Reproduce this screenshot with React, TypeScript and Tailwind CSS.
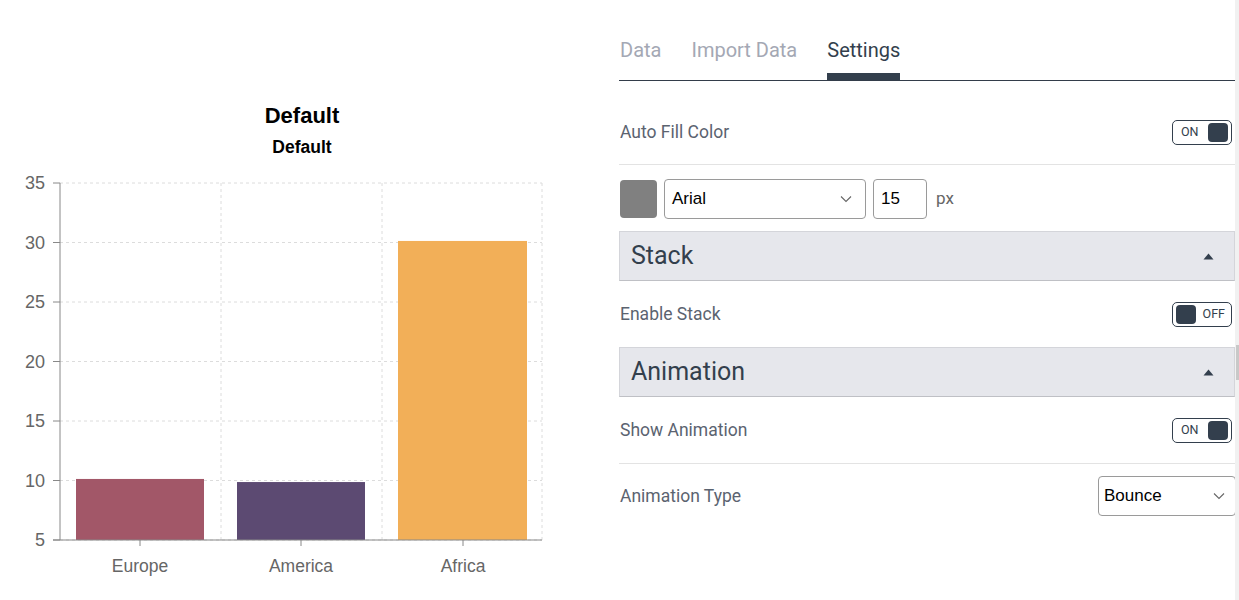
import React from "react";

function Toggle({ on }: { on: boolean }) {
  return (
    <div className="flex h-[25px] w-[60px] items-center justify-between rounded-[5px] border border-[#333f4d] px-[3px]">
      {on ? (
        <>
          <span className="pl-[5px] text-[12.5px] text-[#333f4d]">ON</span>
          <span className="h-[19px] w-[20px] rounded-[4px] bg-[#333f4d]" />
        </>
      ) : (
        <>
          <span className="h-[19px] w-[20px] rounded-[4px] bg-[#333f4d]" />
          <span className="pr-[3px] text-[12.5px] text-[#333f4d]">OFF</span>
        </>
      )}
    </div>
  );
}

function Chevron() {
  return (
    <svg width="12" height="8" viewBox="0 0 12 8" fill="none">
      <path d="M1 1.5 L6 6.5 L11 1.5" stroke="#666" strokeWidth="1.1" />
    </svg>
  );
}

function Caret() {
  return (
    <svg width="11" height="7" viewBox="0 0 11 7">
      <path d="M0.5 6.5 L5.5 0.5 L10.5 6.5 Z" fill="#333f4d" />
    </svg>
  );
}

function Header({ title }: { title: string }) {
  return (
    <div className="flex h-[50px] items-center justify-between border border-[#d4d5da] border-b-[#bfc0c5] bg-[#e6e7ec] pl-[11px] pr-[20px]">
      <span className="text-[25px] text-[#333f4d]">{title}</span>
      <Caret />
    </div>
  );
}

function Chart() {
  const ticks = [35, 30, 25, 20, 15, 10, 5];
  const y = (v: number) => 540 - (v - 5) * 11.9;
  const bars = [
    { label: "Europe", x: 76, w: 128, v: 10.13, c: "#a25768", cx: 140 },
    { label: "America", x: 237, w: 128, v: 9.87, c: "#5c4a72", cx: 301 },
    { label: "Africa", x: 398, w: 129, v: 30.13, c: "#f2af58", cx: 463 },
  ];
  const font = "'Liberation Sans', Arial, sans-serif";
  return (
    <svg width="619" height="600" viewBox="0 0 619 600" style={{ fontFamily: font }}>
      <text x="302" y="123" textAnchor="middle" fontSize="22" fontWeight="bold" fill="#000">
        Default
      </text>
      <text x="302" y="153" textAnchor="middle" fontSize="17.5" fontWeight="bold" fill="#000">
        Default
      </text>
      {ticks.map((t) => (
        <g key={t}>
          <line x1="60" x2="542" y1={y(t)} y2={y(t)} stroke="#dcdcdc" strokeDasharray="3 3" />
          <line x1="53" x2="60" y1={y(t)} y2={y(t)} stroke="#888" />
          <text x="45" y={y(t) + 6} textAnchor="end" fontSize="18" fill="#666">
            {t}
          </text>
        </g>
      ))}
      {[221, 382, 542].map((x) => (
        <line key={x} x1={x} x2={x} y1="183" y2="540" stroke="#dcdcdc" strokeDasharray="3 3" />
      ))}
      {bars.map((b) => (
        <rect key={b.label} x={b.x} y={y(b.v)} width={b.w} height={540 - y(b.v)} fill={b.c} />
      ))}
      <line x1="60" x2="60" y1="183" y2="540" stroke="#888" />
      <line x1="53" x2="542" y1="540" y2="540" stroke="#888" />
      {bars.map((b) => (
        <g key={b.label + "t"}>
          <line x1={b.cx} x2={b.cx} y1="540" y2="546" stroke="#888" />
          <text x={b.cx} y="572" textAnchor="middle" fontSize="17.5" fill="#666">
            {b.label}
          </text>
        </g>
      ))}
    </svg>
  );
}

export default function App() {
  return (
    <div className="flex h-[600px] w-[1239px] overflow-hidden bg-white" style={{ fontFamily: "Roboto, 'Noto Sans', sans-serif" }}>
      <div className="w-[619px] shrink-0">
        <Chart />
      </div>
      <div className="w-[616px] shrink-0">
        <div className="flex h-[81px] items-end gap-[30px] border-b border-[#333d4a] pl-[1px]">
          <div className="flex h-[73px] items-center pt-[12px] text-[20px] text-[#a4a8b4]">Data</div>
          <div className="flex h-[73px] items-center pt-[12px] text-[20px] text-[#a4a8b4]">Import Data</div>
          <div className="flex flex-col">
            <div className="flex h-[66px] items-center pt-[19px] text-[20px] text-[#333f4d]">Settings</div>
            <div className="h-[7px] bg-[#333f4d]" />
          </div>
        </div>
        <div className="flex h-[84px] items-center justify-between border-b border-[#e3e3e3] pl-[1px] pr-[3px] pt-[20px]">
          <span className="text-[17.5px] text-[#5b6370]">Auto Fill Color</span>
          <Toggle on />
        </div>
        <div className="flex items-center gap-[7px] pl-[1px] pt-[14px]">
          <div className="h-[38px] w-[37px] rounded-[4px] bg-[#808080]" />
          <div className="flex h-[40px] w-[202px] items-center justify-between rounded-[4px] border border-[#9a9a9a] pl-[7px] pr-[13px]" style={{ fontFamily: "'Liberation Sans', Arial, sans-serif" }}>
            <span className="text-[17px] text-black">Arial</span>
            <Chevron />
          </div>
          <div className="flex h-[40px] w-[54px] items-center rounded-[4px] border border-[#9a9a9a] pl-[7px]" style={{ fontFamily: "'Liberation Sans', Arial, sans-serif" }}>
            <span className="text-[17px] text-black">15</span>
          </div>
          <span className="pl-[2px] text-[17px] text-[#666]">px</span>
        </div>
        <div className="pt-[12px]">
          <Header title="Stack" />
        </div>
        <div className="flex h-[66px] items-center justify-between pl-[1px] pr-[3px]">
          <span className="text-[17.5px] text-[#5b6370]">Enable Stack</span>
          <Toggle on={false} />
        </div>
        <Header title="Animation" />
        <div className="flex h-[67px] items-center justify-between border-b border-[#e3e3e3] pl-[1px] pr-[3px]">
          <span className="text-[17.5px] text-[#5b6370]">Show Animation</span>
          <Toggle on />
        </div>
        <div className="flex h-[64px] items-center justify-between pl-[1px]">
          <span className="text-[17.5px] text-[#5b6370]">Animation Type</span>
          <div className="mr-[-1px] flex h-[40px] w-[138px] items-center justify-between rounded-[4px] border border-[#9a9a9a] pl-[5px] pr-[10px]" style={{ fontFamily: "'Liberation Sans', Arial, sans-serif" }}>
            <span className="text-[17px] text-black">Bounce</span>
            <Chevron />
          </div>
        </div>
      </div>
      <div className="relative w-[4px] shrink-0 bg-[#f1f1f1]">
        <div className="absolute left-[1px] top-[345px] h-[35px] w-[3px] bg-[#c8c8c8]" />
      </div>
    </div>
  );
}
